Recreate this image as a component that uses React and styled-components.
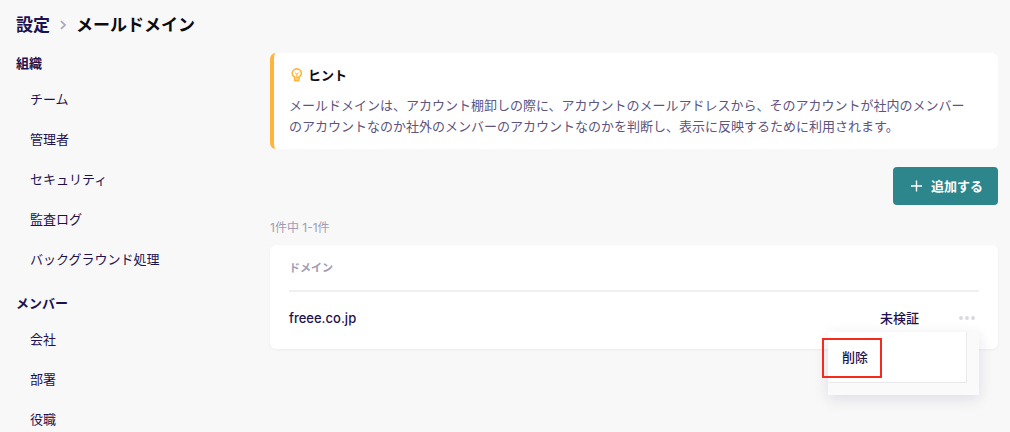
import React from 'react';
import styled, { createGlobalStyle, ThemeProvider } from 'styled-components';

const theme = {
  colors: {
    background: '#f8f8f8',
    white: '#ffffff',
    black: '#0c0c10',
    navy: '#1d124f',
    text: '#5d5480',
    muted: '#a19cb5',
    line: '#f0f0f1',
    teal: '#2c868b',
    yellow: '#ffb53c',
    red: '#f5291c',
  },
};

const GlobalStyle = createGlobalStyle`
  *, *::before, *::after {
    box-sizing: border-box;
  }

  body {
    margin: 0;
    background-color: ${theme.colors.background};
    color: ${theme.colors.navy};
    font-family: Inter, 'Noto Sans CJK JP', sans-serif;
    font-size: 13px;
    line-height: 20px;
  }
`;

const Breadcrumb = styled.nav`
  padding: 12px 16px 8px;
  display: flex;
  align-items: center;
  gap: 9px;
  font-size: 17px;
  line-height: 26px;
  font-weight: 700;
`;

const BreadcrumbLink = styled.a`
  color: ${({ theme }) => theme.colors.navy};
  text-decoration: none;
`;

const PageTitle = styled.h1`
  margin: 0;
  font-size: 17px;
  font-weight: 700;
  color: ${({ theme }) => theme.colors.black};
`;

const Layout = styled.div`
  display: grid;
  grid-template-columns: 270px minmax(0, 1fr);
`;

const Sidebar = styled.nav`
  display: flex;
  flex-direction: column;
  gap: 7px;
`;

const GroupTitle = styled.h2`
  height: 33px;
  margin: 0;
  padding: 0 16px;
  font-size: 13px;
  line-height: 34px;
  font-weight: 700;
`;

const MenuList = styled.ul`
  margin: 0;
  padding: 0;
  list-style: none;
`;

const MenuLink = styled.a`
  display: block;
  padding: 0 30px;
  line-height: 40px;
  color: ${({ theme }) => theme.colors.navy};
  text-decoration: none;
`;

const Main = styled.main`
  padding: 7px 12px 24px 0;
  display: flex;
  flex-direction: column;
`;

const Hint = styled.section`
  padding: 12px 24px 12px 15px;
  border-left: 4px solid ${({ theme }) => theme.colors.yellow};
  border-radius: 6px;
  background-color: ${({ theme }) => theme.colors.white};
`;

const HintTitle = styled.h2`
  margin: 0 0 10px;
  display: flex;
  align-items: center;
  gap: 4px;
  font-size: 13px;
  line-height: 20px;
  font-weight: 700;
  color: ${({ theme }) => theme.colors.black};
`;

const HintText = styled.p`
  margin: 0;
  line-height: 21px;
  color: ${({ theme }) => theme.colors.text};
`;

const AddButton = styled.button`
  align-self: flex-end;
  height: 38px;
  margin: 18px 0 13px;
  padding: 0 15px;
  display: flex;
  align-items: center;
  gap: 7px;
  border: none;
  border-radius: 4px;
  background-color: ${({ theme }) => theme.colors.teal};
  color: ${({ theme }) => theme.colors.white};
  font: inherit;
  font-weight: 700;
  cursor: pointer;
`;

const Count = styled.p`
  margin: 0 0 7px;
  font-size: 12px;
  color: ${({ theme }) => theme.colors.muted};
`;

const Card = styled.div`
  padding: 0 19px 6px;
  border-radius: 6px;
  background-color: ${({ theme }) => theme.colors.white};
  box-shadow: 0 1px 3px rgba(29, 18, 79, 0.05);
`;

const Table = styled.table`
  width: 100%;
  border-collapse: separate;
  border-spacing: 0;
  text-align: left;
`;

const HeadCell = styled.th`
  width: ${({ $width }) => $width || 'auto'};
  height: 47px;
  padding: 1px 0 0;
  border-bottom: 2px solid ${({ theme }) => theme.colors.line};
  font-size: 11px;
  font-weight: 700;
  color: ${({ theme }) => theme.colors.muted};
`;

const Cell = styled.td`
  position: relative;
  height: 51px;
  padding: 0;
  font-weight: 500;
`;

const MoreButton = styled.button`
  display: block;
  margin-left: auto;
  padding: 4px;
  border: none;
  background: none;
  line-height: 0;
  cursor: pointer;
`;

const Dropdown = styled.div`
  position: absolute;
  top: 40px;
  right: 0;
  width: 151px;
  padding: 0 12px 12px 0;
  background-color: #fafafa;
  box-shadow: 0 4px 14px rgba(29, 18, 79, 0.12);
`;

const DropdownBody = styled.div`
  position: relative;
  padding: 5px 0;
  border-right: 1px solid #e9e9eb;
  border-bottom: 1px solid #e9e9eb;
  background-color: ${({ theme }) => theme.colors.white};
`;

const DropdownItem = styled.button`
  display: block;
  width: 100%;
  height: 40px;
  padding: 0 14px;
  border: none;
  background: none;
  color: ${({ theme }) => theme.colors.navy};
  font: inherit;
  text-align: left;
  cursor: pointer;
`;

const Highlight = styled.span`
  position: absolute;
  top: 6px;
  left: -6px;
  width: 60px;
  height: 40px;
  border: 2px solid ${({ theme }) => theme.colors.red};
  pointer-events: none;
`;

const groups = [
  {
    title: '組織',
    items: [
      'チーム',
      '管理者',
      'セキュリティ',
      '監査ログ',
      'バックグラウンド処理',
    ],
  },
  { title: 'メンバー', items: ['会社', '部署', '役職'] },
];

const domains = [{ name: 'freee.co.jp', status: '未検証' }];

function ChevronIcon() {
  return (
    <svg width="8" height="10" viewBox="0 0 8 10" fill="none" aria-hidden="true">
      <path d="M2 1.2 6 5 2 8.8" stroke="#a9a4bd" strokeWidth="1.7" />
    </svg>
  );
}

function BulbIcon() {
  return (
    <svg width="15" height="16" viewBox="0 0 15 16" fill="none" aria-hidden="true">
      <path
        d="M5.7 11V10C4.2 9.3 3.2 8.1 3.2 6.5a4.6 4.6 0 0 1 9.2 0c0 1.6-1 2.8-2.5 3.5v1z"
        stroke="#ffb53c"
        strokeWidth="1.6"
      />
      <path d="M6 5.8 7.8 7 9.6 5.8M7.8 7v3.5" stroke="#ffb53c" strokeWidth="1" />
      <path d="M4.9 10.8h5.8v2.4l-1 1.4H5.9l-1-1.4z" fill="#ffb53c" />
      <path d="M6.3 12h3" stroke="#fff" strokeWidth="0.7" />
    </svg>
  );
}

function PlusIcon() {
  return (
    <svg width="16" height="14" viewBox="0 0 16 14" fill="none" aria-hidden="true">
      <path d="M8.5 1.5v11M3 7h11" stroke="#fff" strokeWidth="1.4" />
    </svg>
  );
}

function MoreIcon() {
  return (
    <svg width="16" height="4" viewBox="0 0 16 4" fill="#d9d8dd" aria-hidden="true">
      <circle cx="2" cy="2" r="1.9" />
      <circle cx="8" cy="2" r="1.9" />
      <circle cx="14" cy="2" r="1.9" />
    </svg>
  );
}

function DomainRow({ domain }) {
  return (
    <tr>
      <Cell>{domain.name}</Cell>
      <Cell>{domain.status}</Cell>
      <Cell>
        <MoreButton type="button" aria-label="メニュー">
          <MoreIcon />
        </MoreButton>
        <Dropdown>
          <DropdownBody>
            <DropdownItem type="button">削除</DropdownItem>
            <Highlight />
          </DropdownBody>
        </Dropdown>
      </Cell>
    </tr>
  );
}

function App() {
  return (
    <ThemeProvider theme={theme}>
      <GlobalStyle />
      <Breadcrumb>
        <BreadcrumbLink href="#settings">設定</BreadcrumbLink>
        <ChevronIcon />
        <PageTitle>メールドメイン</PageTitle>
      </Breadcrumb>
      <Layout>
        <Sidebar>
          {groups.map((group) => (
            <div key={group.title}>
              <GroupTitle>{group.title}</GroupTitle>
              <MenuList>
                {group.items.map((item) => (
                  <li key={item}>
                    <MenuLink href="#menu">{item}</MenuLink>
                  </li>
                ))}
              </MenuList>
            </div>
          ))}
        </Sidebar>
        <Main>
          <Hint>
            <HintTitle>
              <BulbIcon />
              ヒント
            </HintTitle>
            <HintText>
              メールドメインは、アカウント棚卸しの際に、アカウントのメールアドレスから、そのアカウントが社内のメンバーのアカウントなのか社外のメンバーのアカウントなのかを判断し、表示に反映するために利用されます。
            </HintText>
          </Hint>
          <AddButton type="button">
            <PlusIcon />
            追加する
          </AddButton>
          <Count>1件中 1-1件</Count>
          <Card>
            <Table>
              <thead>
                <tr>
                  <HeadCell scope="col">ドメイン</HeadCell>
                  <HeadCell scope="col" $width="67px" aria-label="状態" />
                  <HeadCell scope="col" $width="32px" aria-label="操作" />
                </tr>
              </thead>
              <tbody>
                {domains.map((domain) => (
                  <DomainRow key={domain.name} domain={domain} />
                ))}
              </tbody>
            </Table>
          </Card>
        </Main>
      </Layout>
    </ThemeProvider>
  );
}

export default App;
